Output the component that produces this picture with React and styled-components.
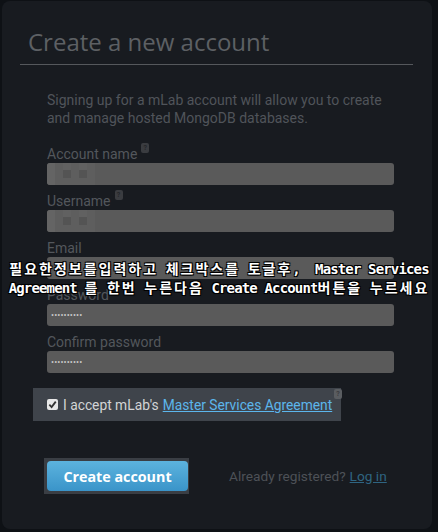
import React from 'react'
import styled, { createGlobalStyle } from 'styled-components'

const Global = createGlobalStyle`
  html, body {
    margin: 0;
    padding: 0;
    background: #0e1115;
  }
  body {
    font-family: Roboto, "Noto Sans", sans-serif;
  }
`

const Page = styled.div`
  position: relative;
  width: 438px;
  height: 532px;
  padding: 1px 6px 3px 2px;
  box-sizing: border-box;
`

const Panel = styled.main`
  height: 100%;
  background: #181b20;
  border-radius: 8px;
  padding: 27px 19px 0 18px;
  box-sizing: border-box;
`

const Title = styled.h1`
  margin: 0;
  padding: 0 0 8px 8px;
  font-family: "Open Sans", sans-serif;
  font-weight: 400;
  font-size: 24px;
  line-height: 28px;
  color: #5d6064;
  border-bottom: 1px solid #55585c;
`

const Content = styled.section`
  padding: 26px 19px 0 27px;
`

const Intro = styled.p`
  margin: 0 0 18px;
  font-size: 14px;
  line-height: 18px;
  color: #50545a;
`

const Field = styled.div`
  margin-bottom: 7px;
`

const Label = styled.label`
  display: block;
  height: 18px;
  font-size: 14px;
  line-height: 18px;
  color: #53575c;
`

const Help = styled.span`
  display: inline-block;
  position: relative;
  top: -2px;
  width: 8px;
  height: 10px;
  margin-left: 4px;
  vertical-align: top;
  border-radius: 2px;
  background: ${p => p.$light ? '#5a5d61' : '#3a3c40'};
  color: ${p => p.$light ? '#3a3c40' : '#24262a'};
  font-size: 7px;
  line-height: 10px;
  text-align: center;
  font-weight: 700;
`

const Input = styled.div`
  position: relative;
  height: 22px;
  border-radius: 3px;
  background: #5a5a5a;
  display: flex;
  align-items: center;
  padding-left: 4px;
  box-sizing: border-box;
  overflow: hidden;
`

const Mosaic = styled.span`
  display: flex;
  height: 100%;
  margin-left: -4px;
  span {
    width: 8px;
    height: 100%;
    background: #646464;
  }
  span:nth-child(even) {
    background: #5e5e5e;
  }
  span:nth-child(3), span:nth-child(5) {
    background: linear-gradient(#616161 30%, #545454 30%, #545454 70%, #5e5e5e 70%);
  }
`

const Dots = styled.span`
  font-size: 9px;
  letter-spacing: 0.1px;
  color: #c8c8c8;
  line-height: 1;
`

const Accept = styled.div`
  display: flex;
  align-items: center;
  width: 308px;
  height: 33px;
  margin: 15px 0 0 -14px;
  padding-left: 14px;
  box-sizing: border-box;
  background: #3f444b;
  position: relative;
  font-size: 13.8px;
  color: #d2d4d6;
`

const Check = styled.span`
  width: 11px;
  height: 11px;
  margin-right: 5px;
  border-radius: 2px;
  background: #e8e8e8;
  display: flex;
  align-items: center;
  justify-content: center;
`

const Link = styled.a`
  color: ${p => p.$dim ? '#2f6582' : '#5cb6ec'};
  text-decoration: underline;
  margin-left: 4px;
`

const Corner = styled.span`
  position: absolute;
  right: -1px;
  top: 3px;
`

const Actions = styled.div`
  display: flex;
  align-items: center;
  margin: 37px 0 0 -3px;
`

const ButtonFrame = styled.div`
  padding: 3px 1px 3px 3px;
  background: #3a3e44;
`

const Button = styled.button`
  width: 141px;
  height: 30px;
  border: 0;
  border-radius: 4px;
  background: linear-gradient(#5cb3de, #3a94c9);
  color: #fff;
  font-family: "Open Sans", sans-serif;
  font-weight: 700;
  font-size: 14.3px;
  padding: 0;
`

const Already = styled.span`
  margin-left: 40px;
  font-size: 13.7px;
  color: #4d5157;
`

const Caption = styled.div`
  position: absolute;
  left: 0;
  right: 0;
  top: 259px;
  text-align: center;
  white-space: pre;
  font-family: "DejaVu Sans Mono", monospace;
  font-weight: 700;
  font-size: 14px;
  letter-spacing: -0.85px;
  line-height: 18px;
  color: #fff;
  text-shadow: 1px 1px 0 #000, -1px -1px 0 #000, 1px -1px 0 #000, -1px 1px 0 #000, 0 0 2px #000;
`

const Hangul = styled.span`
  font-family: "Noto Sans CJK KR", sans-serif;
  letter-spacing: 2px;
`

const captionText = '필요한정보를입력하고 체크박스를 토글후,  Master Services\nAgreement 를 한번 누른다음 Create Account버튼을 누르세요'

const fields = [
  { label: 'Account name', help: true, mask: true },
  { label: 'Username', help: true, mask: true },
  { label: 'Email' },
  { label: 'Password', dots: true },
  { label: 'Confirm password', dots: true },
]

export default function App() {
  return (
    <Page>
      <Global />
      <Panel>
        <Title>Create a new account</Title>
        <Content>
          <Intro>
            Signing up for a mLab account will allow you to create and manage hosted MongoDB databases.
          </Intro>
          {fields.map(f => (
            <Field key={f.label}>
              <Label>
                {f.label}
                {f.help && <Help>?</Help>}
              </Label>
              <Input>
                {f.mask && (
                  <Mosaic>
                    <span /><span /><span /><span /><span /><span />
                  </Mosaic>
                )}
                {f.dots && <Dots>••••••••••</Dots>}
              </Input>
            </Field>
          ))}
          <Accept>
            <Check>
              <svg width="9" height="9" viewBox="0 0 10 10">
                <path d="M1.5 5.2 L4 7.8 L8.6 1.8" fill="none" stroke="#333" strokeWidth="2" />
              </svg>
            </Check>
            I accept mLab's
            <Link href="#">Master Services Agreement</Link>
            <Corner><Help $light>?</Help></Corner>
          </Accept>
          <Actions>
            <ButtonFrame>
              <Button>Create account</Button>
            </ButtonFrame>
            <Already>
              Already registered?<Link href="#" $dim>Log in</Link>
            </Already>
          </Actions>
        </Content>
      </Panel>
      <Caption>
        {captionText.split(/([가-힣]+)/).map((part, i) =>
          /[가-힣]/.test(part) ? <Hangul key={i}>{part}</Hangul> : part
        )}
      </Caption>
    </Page>
  )
}
